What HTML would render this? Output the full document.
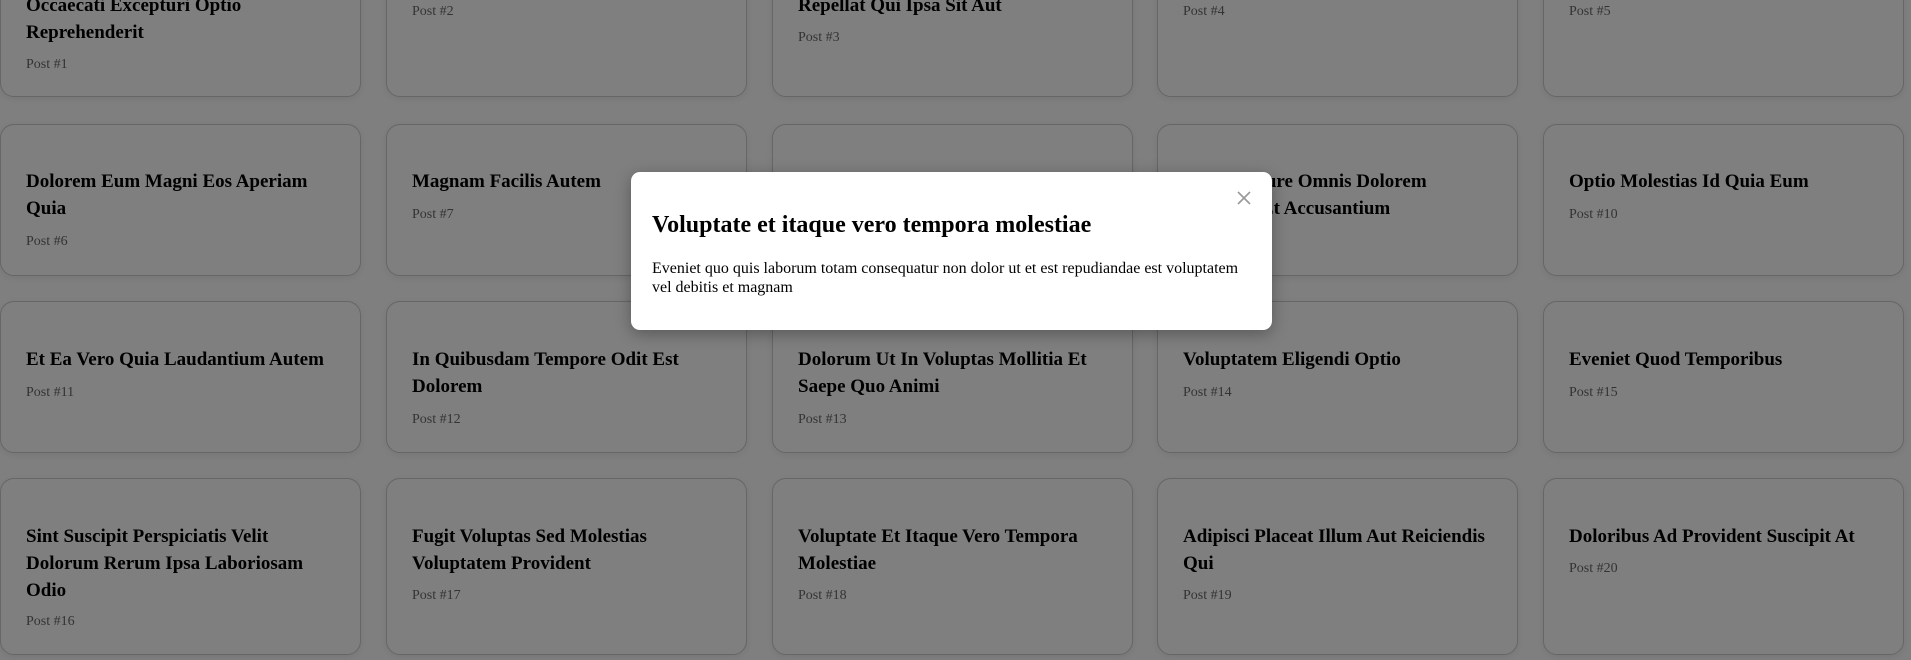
<!DOCTYPE html>
<html><head><meta charset="utf-8"><style>
*{margin:0;padding:0;box-sizing:border-box}
body{width:1911px;height:660px;overflow:hidden;background:#fff;position:relative;font-family:"Liberation Serif",serif}
.c{position:absolute;width:361px;border:1px solid #ccc;border-radius:14px;background:#fff;box-shadow:0 2px 8px rgba(0,0,0,.08)}
.t{position:absolute;font-weight:bold;font-size:19px;line-height:27px;color:#000;white-space:nowrap}
.p{position:absolute;font-size:14px;line-height:18px;color:#666;white-space:nowrap}
.ov{position:absolute;left:0;top:0;width:1911px;height:660px;background:rgba(0,0,0,.5)}
.m{position:absolute;left:631px;top:172px;width:641px;height:158px;background:#fff;border-radius:9px;box-shadow:0 4px 16px rgba(0,0,0,.3)}
</style></head><body>
<div class="c" style="left:0;top:-60px;height:157px"></div>
<div class="c" style="left:386px;top:-60px;height:157px"></div>
<div class="c" style="left:772px;top:-60px;height:157px"></div>
<div class="c" style="left:1157px;top:-60px;height:157px"></div>
<div class="c" style="left:1543px;top:-60px;height:157px"></div>
<div class="t" style="left:26px;top:-8px">Occaecati Excepturi Optio<br>Reprehenderit</div>
<div class="p" style="left:26px;top:56px">Post #1</div>
<div class="p" style="left:412px;top:3px">Post #2</div>
<div class="t" style="left:798px;top:-8px">Repellat Qui Ipsa Sit Aut</div>
<div class="p" style="left:798px;top:29px">Post #3</div>
<div class="p" style="left:1183px;top:3px">Post #4</div>
<div class="p" style="left:1569px;top:3px">Post #5</div>
<div class="c" style="left:0;top:124px;height:152px"></div>
<div class="c" style="left:386px;top:124px;height:152px"></div>
<div class="c" style="left:772px;top:124px;height:152px"></div>
<div class="c" style="left:1157px;top:124px;height:152px"></div>
<div class="c" style="left:1543px;top:124px;height:152px"></div>
<div class="t" style="left:26px;top:168px">Dolorem Eum Magni Eos Aperiam<br>Quia</div>
<div class="p" style="left:26px;top:233px">Post #6</div>
<div class="t" style="left:412px;top:168px">Magnam Facilis Autem</div>
<div class="p" style="left:412px;top:206px">Post #7</div>
<div class="t" style="left:798px;top:168px">Dolorem Dolore Est Ipsam</div>
<div class="p" style="left:798px;top:206px">Post #8</div>
<div class="t" style="left:1183px;top:168px">Nesciunt Iure Omnis Dolorem<br>Tempora Et Accusantium</div>
<div class="p" style="left:1183px;top:233px">Post #9</div>
<div class="t" style="left:1569px;top:168px">Optio Molestias Id Quia Eum</div>
<div class="p" style="left:1569px;top:206px">Post #10</div>
<div class="c" style="left:0;top:301px;height:152px"></div>
<div class="c" style="left:386px;top:301px;height:152px"></div>
<div class="c" style="left:772px;top:301px;height:152px"></div>
<div class="c" style="left:1157px;top:301px;height:152px"></div>
<div class="c" style="left:1543px;top:301px;height:152px"></div>
<div class="t" style="left:26px;top:346px">Et Ea Vero Quia Laudantium Autem</div>
<div class="p" style="left:26px;top:384px">Post #11</div>
<div class="t" style="left:412px;top:346px">In Quibusdam Tempore Odit Est<br>Dolorem</div>
<div class="p" style="left:412px;top:411px">Post #12</div>
<div class="t" style="left:798px;top:346px">Dolorum Ut In Voluptas Mollitia Et<br>Saepe Quo Animi</div>
<div class="p" style="left:798px;top:411px">Post #13</div>
<div class="t" style="left:1183px;top:346px">Voluptatem Eligendi Optio</div>
<div class="p" style="left:1183px;top:384px">Post #14</div>
<div class="t" style="left:1569px;top:346px">Eveniet Quod Temporibus</div>
<div class="p" style="left:1569px;top:384px">Post #15</div>
<div class="c" style="left:0;top:478px;height:177px"></div>
<div class="c" style="left:386px;top:478px;height:177px"></div>
<div class="c" style="left:772px;top:478px;height:177px"></div>
<div class="c" style="left:1157px;top:478px;height:177px"></div>
<div class="c" style="left:1543px;top:478px;height:177px"></div>
<div class="t" style="left:26px;top:523px">Sint Suscipit Perspiciatis Velit<br>Dolorum Rerum Ipsa Laboriosam<br>Odio</div>
<div class="p" style="left:26px;top:613px">Post #16</div>
<div class="t" style="left:412px;top:523px">Fugit Voluptas Sed Molestias<br>Voluptatem Provident</div>
<div class="p" style="left:412px;top:587px">Post #17</div>
<div class="t" style="left:798px;top:523px">Voluptate Et Itaque Vero Tempora<br>Molestiae</div>
<div class="p" style="left:798px;top:587px">Post #18</div>
<div class="t" style="left:1183px;top:523px">Adipisci Placeat Illum Aut Reiciendis<br>Qui</div>
<div class="p" style="left:1183px;top:587px">Post #19</div>
<div class="t" style="left:1569px;top:523px">Doloribus Ad Provident Suscipit At</div>
<div class="p" style="left:1569px;top:560px">Post #20</div>
<div class="ov"></div>
<div class="m">
<svg style="position:absolute;left:606px;top:19px" width="14" height="14" viewBox="0 0 14 14"><path d="M1 1L13 13M13 1L1 13" stroke="#999" stroke-width="1.6"/></svg>
<div style="position:absolute;left:21px;top:38px;font-weight:bold;font-size:24px;line-height:30px;color:#000;white-space:nowrap">Voluptate et itaque vero tempora molestiae</div>
<div style="position:absolute;left:21px;top:87px;width:600px;font-size:16px;line-height:19px;color:#000">Eveniet quo quis laborum totam consequatur non dolor ut et est repudiandae est voluptatem<br>vel debitis et magnam</div>
</div>
</body></html>
